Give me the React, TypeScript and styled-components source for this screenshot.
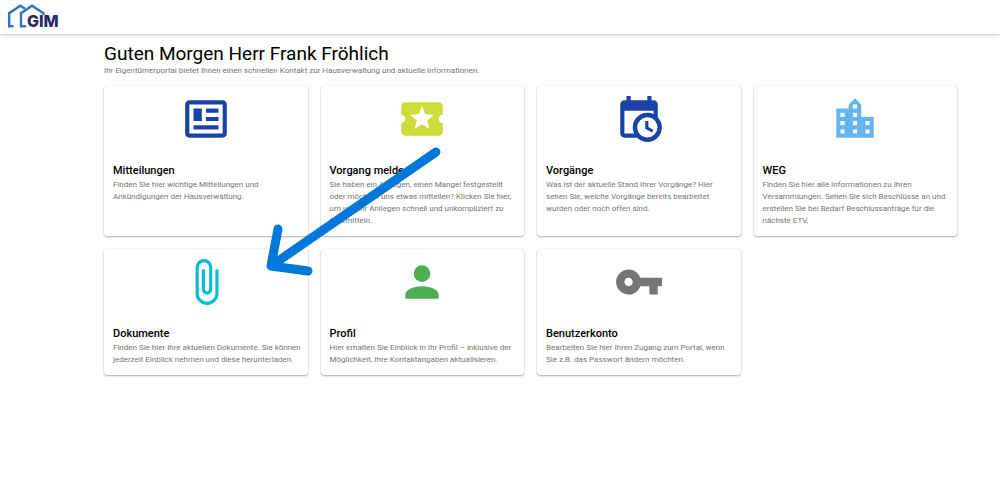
import React from "react";
import styled, { createGlobalStyle } from "styled-components";

const GlobalStyle = createGlobalStyle`
  *, *::before, *::after { box-sizing: border-box; }
  body {
    margin: 0;
    background: #fff;
    color: #000;
    font-family: Roboto, "Liberation Sans", sans-serif;
  }
`;

const TopBar = styled.header`
  display: flex;
  align-items: flex-start;
  height: 34px;
  padding: 4px 8px 0;
  background: #fff;
  box-shadow: 0 1px 3px rgba(0, 0, 0, 0.24);
`;

const LogoLink = styled.a`
  display: block;
  line-height: 0;
`;

const Main = styled.main`
  padding: 8px 43px 24px 104px;
`;

const Greeting = styled.h1`
  margin: 0;
  font-size: 19px;
  font-weight: 400;
  line-height: 24px;
`;

const Intro = styled.p`
  margin: 0 0 10px;
  color: #757575;
  font-size: 8px;
  line-height: 10px;
`;

const Tiles = styled.div`
  position: relative;
  display: grid;
  grid-template-columns: repeat(4, minmax(0, 1fr));
  gap: 13px;
`;

const Tile = styled.a`
  display: flex;
  flex-direction: column;
  padding: 8px 5px 9px 9px;
  border-radius: 3px;
  background: #fff;
  box-shadow: 0 1px 2px rgba(0, 0, 0, 0.3), 0 0 1px rgba(0, 0, 0, 0.2);
  color: inherit;
  text-decoration: none;
`;

const TileIcon = styled.svg<{ $color: string }>`
  align-self: center;
  width: 50px;
  height: 50px;
  margin: 0 4px 19px 0;
  fill: ${(p) => p.$color};
`;

const TileTitle = styled.h2`
  margin: 0;
  font-size: 11px;
  font-weight: 500;
  line-height: 16px;
`;

const TileText = styled.p`
  margin: 0;
  color: #757575;
  font-size: 8px;
  line-height: 12px;
`;

const Pointer = styled.svg`
  position: absolute;
  top: 59px;
  left: 18.76%;
  width: 21.1%;
  pointer-events: none;
  fill: none;
  stroke: #0078d7;
  stroke-width: 9;
  stroke-linecap: round;
  stroke-linejoin: round;
`;

const tiles = [
  {
    title: "Mitteilungen",
    text: "Finden Sie hier wichtige Mitteilungen und Ankündigungen der Hausverwaltung.",
    color: "#1a43a8",
    path: "M20 5V19H4V5H20M20 3H4C2.89 3 2 3.89 2 5V19C2 20.11 2.89 21 4 21H20C21.11 21 22 20.11 22 19V5C22 3.89 21.11 3 20 3M18 15H6V17H18V15M10 7H6V13H10V7M12 9H18V7H12V9M18 11H12V13H18V11Z",
  },
  {
    title: "Vorgang melden",
    text: "Sie haben ein Anliegen, einen Mangel festgestellt oder möchten uns etwas mitteilen? Klicken Sie hier, um uns Ihr Anliegen schnell und unkompliziert zu übermitteln.",
    color: "#cddc39",
    path: "M20 12c0-1.1.9-2 2-2V6c0-1.1-.9-2-2-2H4c-1.1 0-1.99.9-1.99 2v4c1.1 0 1.99.9 1.99 2s-.89 2-2 2v4c0 1.1.9 2 2 2h16c1.1 0 2-.9 2-2v-4c-1.1 0-2-.9-2-2zm-4.42 4.8L12 14.5l-3.58 2.3 1.08-4.12-3.29-2.69 4.24-.25L12 5.8l1.54 3.95 4.24.25-3.29 2.69 1.09 4.11z",
  },
  {
    title: "Vorgänge",
    text: "Was ist der aktuelle Stand Ihrer Vorgänge? Hier sehen Sie, welche Vorgänge bereits bearbeitet wurden oder noch offen sind.",
    color: "#1a43a8",
    path: "M15,13H16.5V15.82L18.94,17.23L18.19,18.53L15,16.69V13M19,8H5V19H9.67C9.24,18.09 9,17.07 9,16A7,7 0 0,1 16,9C17.07,9 18.09,9.24 19,9.67V8M5,21C3.89,21 3,20.1 3,19V5C3,3.89 3.89,3 5,3H6V1H8V3H16V1H18V3H19A2,2 0 0,1 21,5V11.1C22.24,12.36 23,14.09 23,16A7,7 0 0,1 16,23C14.09,23 12.36,22.24 11.1,21H5M16,11.15A4.85,4.85 0 0,0 11.15,16C11.15,18.68 13.32,20.85 16,20.85A4.85,4.85 0 0,0 20.85,16C20.85,13.32 18.68,11.15 16,11.15Z",
  },
  {
    title: "WEG",
    text: "Finden Sie hier alle Informationen zu Ihren Versammlungen. Sehen Sie sich Beschlüsse an und erstellen Sie bei Bedarf Beschlussanträge für die nächste ETV.",
    color: "#64b5f6",
    path: "M15 11V5l-3-3-3 3v2H3v14h18V11h-6zm-8 8H5v-2h2v2zm0-4H5v-2h2v2zm0-4H5V9h2v2zm6 8h-2v-2h2v2zm0-4h-2v-2h2v2zm0-4h-2V9h2v2zm0-4h-2V5h2v2zm6 12h-2v-2h2v2zm0-4h-2v-2h2v2z",
  },
  {
    title: "Dokumente",
    text: "Finden Sie hier Ihre aktuellen Dokumente. Sie können jederzeit Einblick nehmen und diese herunterladen.",
    color: "#00bcd4",
    path: "M16.5,6V17.5A4,4 0 0,1 12.5,21.5A4,4 0 0,1 8.5,17.5V5A2.5,2.5 0 0,1 11,2.5A2.5,2.5 0 0,1 13.5,5V15.5A1,1 0 0,1 12.5,16.5A1,1 0 0,1 11.5,15.5V6H10V15.5A2.5,2.5 0 0,0 12.5,18A2.5,2.5 0 0,0 15,15.5V5A4,4 0 0,0 11,1A4,4 0 0,0 7,5V17.5A5.5,5.5 0 0,0 12.5,23A5.5,5.5 0 0,0 18,17.5V6H16.5Z",
  },
  {
    title: "Profil",
    text: "Hier erhalten Sie Einblick in Ihr Profil – inklusive der Möglichkeit, Ihre Kontaktangaben aktualisieren.",
    color: "#4caf50",
    path: "M12,4A4,4 0 0,1 16,8A4,4 0 0,1 12,12A4,4 0 0,1 8,8A4,4 0 0,1 12,4M12,14C16.42,14 20,15.79 20,18V20H4V18C4,15.79 7.58,14 12,14Z",
  },
  {
    title: "Benutzerkonto",
    text: "Bearbeiten Sie hier Ihren Zugang zum Portal, wenn Sie z.B. das Passwort ändern möchten.",
    color: "#757575",
    path: "M12.65 10C11.83 7.67 9.61 6 7 6c-3.31 0-6 2.69-6 6s2.69 6 6 6c2.61 0 4.83-1.67 5.65-4H17v4h4v-4h2v-4H12.65zM7 14c-1.1 0-2-.9-2-2s.9-2 2-2 2 .9 2 2-.9 2-2 2z",
  },
];

function Logo() {
  return (
    <svg width="60" height="29" viewBox="0 0 60 29" role="img" aria-label="GIM">
      <g fill="none" stroke="#2f75bb" strokeWidth="2.4">
        <path d="M5.500 22.300H1.200V9.200L12.200 1.800L17 4.800" />
        <path d="M18 22.300H13V9.200L24 1.800L35.500 9.200V11" />
      </g>
      <text x="19" y="23" fill="#2d2566" fontFamily="Inter, sans-serif" fontSize="16" fontWeight="800">
        GIM
      </text>
    </svg>
  );
}

export default function App() {
  return (
    <>
      <GlobalStyle />
      <TopBar>
        <LogoLink href="#start">
          <Logo />
        </LogoLink>
      </TopBar>
      <Main>
        <Greeting>Guten Morgen Herr Frank Fröhlich</Greeting>
        <Intro>
          Ihr Eigentümerportal bietet Ihnen einen schnellen Kontakt zur Hausverwaltung und aktuelle Informationen.
        </Intro>
        <Tiles>
          {tiles.map((tile) => (
            <Tile key={tile.title} href={`#${tile.title.toLowerCase().replace(" ", "-")}`}>
              <TileIcon $color={tile.color} viewBox="0 0 24 24" aria-hidden="true">
                <path d={tile.path} />
              </TileIcon>
              <TileTitle>{tile.title}</TileTitle>
              <TileText>{tile.text}</TileText>
            </Tile>
          ))}
          <Pointer viewBox="0 0 180 134" aria-hidden="true">
            <path d="M172 7L7 121M14 84L7 121L44 126" />
          </Pointer>
        </Tiles>
      </Main>
    </>
  );
}
